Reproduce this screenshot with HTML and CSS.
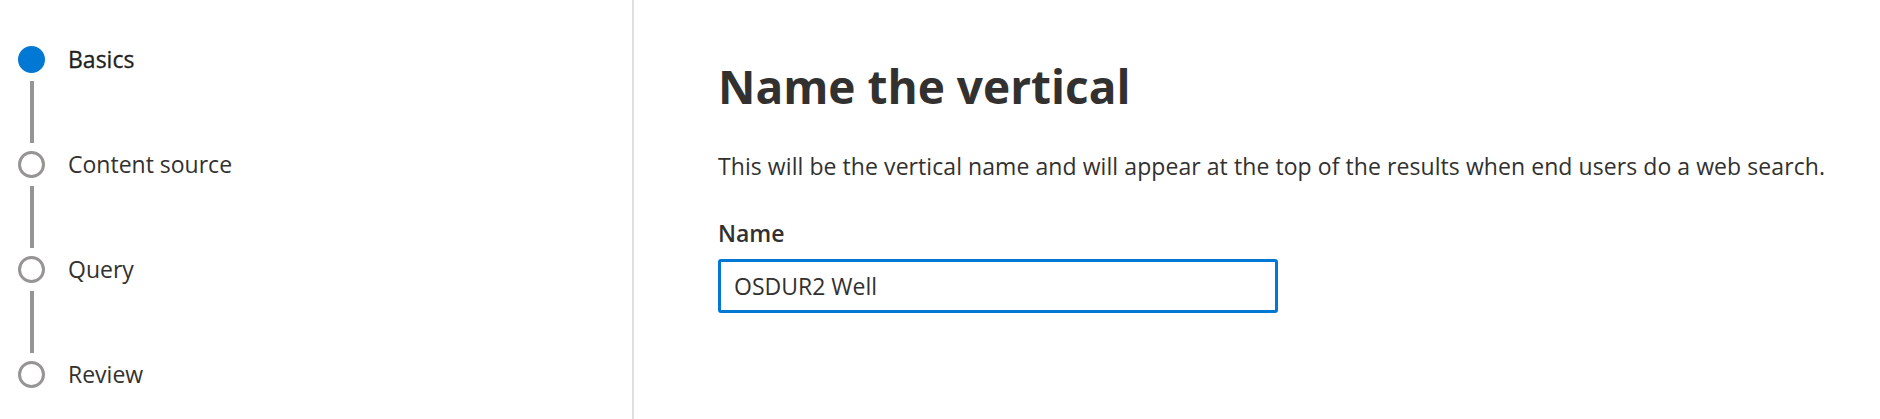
FILE: index.html
```html
<!DOCTYPE html>
<html lang="en">
<head>
<meta charset="utf-8">
<title>Name the vertical</title>
<link rel="stylesheet" href="styles.css">
</head>
<body>
<div class="page">
  <nav class="sidebar">
    <div class="step step-current">
      <span class="dot dot-filled"></span>
      <span class="step-label">Basics</span>
    </div>
    <div class="connector"></div>
    <div class="step">
      <span class="dot"></span>
      <span class="step-label">Content source</span>
    </div>
    <div class="connector"></div>
    <div class="step">
      <span class="dot"></span>
      <span class="step-label">Query</span>
    </div>
    <div class="connector"></div>
    <div class="step">
      <span class="dot"></span>
      <span class="step-label">Review</span>
    </div>
  </nav>
  <main class="content">
    <h1 class="title">Name the vertical</h1>
    <p class="description">This will be the vertical name and will appear at the top of the results when end users do a web search.</p>
    <label class="field-label" for="name">Name</label>
    <div class="input-box">
      <input id="name" class="input" type="text" value="OSDUR2 Well">
    </div>
  </main>
</div>
</body>
</html>
```

FILE: styles.css
```css
html, body {
  margin: 0;
  padding: 0;
  background: #ffffff;
}

body {
  font-family: "Open Sans", "Noto Sans", "Liberation Sans", sans-serif;
  color: #323130;
}

.page {
  display: flex;
  height: 419px;
  overflow: hidden;
}

.sidebar {
  width: 634px;
  flex: 0 0 634px;
  border-right: 2px solid #e1dfdd;
  padding: 46px 0 0 18px;
  box-sizing: border-box;
  display: flex;
  flex-direction: column;
}

.step {
  display: flex;
  align-items: center;
  height: 27px;
  gap: 23px;
}

.dot {
  width: 27px;
  height: 27px;
  box-sizing: border-box;
  border-radius: 50%;
  border: 3px solid #979593;
  flex: 0 0 27px;
}

.dot-filled {
  background: #0078d4;
  border-color: #0078d4;
}

.step-label {
  font-size: 23px;
  line-height: 27px;
  color: #323130;
  white-space: nowrap;
}

.step-current .step-label {
  color: #201f1e;
  -webkit-text-stroke: 0.3px #201f1e;
}

.connector {
  width: 4px;
  height: 62px;
  margin: 8px 0 8px 11.5px;
  background: #979593;
}

.content {
  flex: 1;
  padding: 58px 0 0 84px;
  box-sizing: border-box;
}

.title {
  margin: 0;
  font-size: 46px;
  line-height: 56px;
  font-weight: 700;
  color: #323130;
}

.description {
  margin: 36px 0 0;
  font-size: 23px;
  line-height: 32px;
  letter-spacing: 0.07px;
  color: #323130;
  white-space: nowrap;
}

.field-label {
  display: block;
  margin-top: 35px;
  font-size: 23px;
  line-height: 32px;
  font-weight: 600;
  color: #323130;
}

.input-box {
  margin-top: 10px;
  width: 560px;
  height: 54px;
  box-sizing: border-box;
  border: 3px solid #0078d4;
  border-radius: 3px;
  display: flex;
  align-items: center;
}

.input {
  border: 0;
  outline: none;
  background: transparent;
  width: 100%;
  padding: 0 0 0 13px;
  font-family: inherit;
  font-size: 23px;
  color: #323130;
}
```
